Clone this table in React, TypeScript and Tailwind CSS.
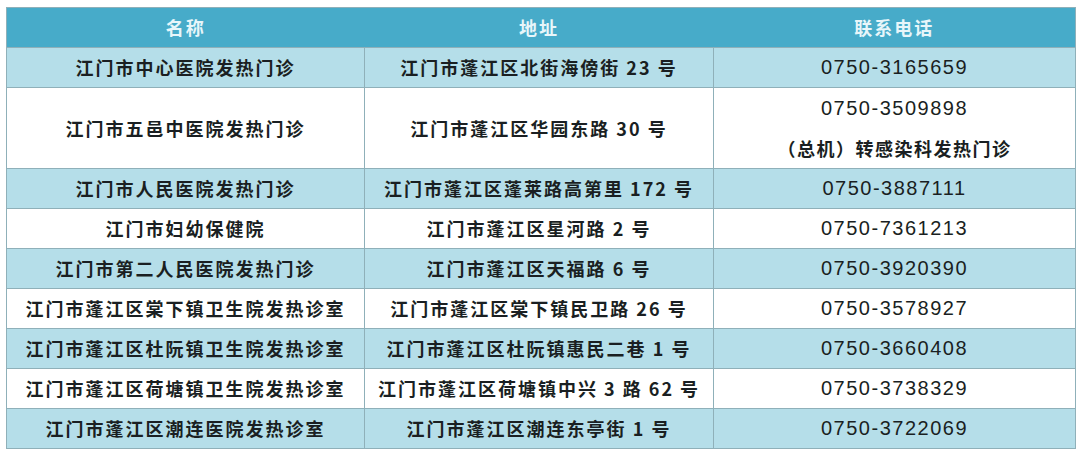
const rows: { name: string; addr: string; phone: string[]; tall?: boolean }[] = [
  { name: "江门市中心医院发热门诊", addr: "江门市蓬江区北街海傍街 23 号", phone: ["0750-3165659"] },
  { name: "江门市五邑中医院发热门诊", addr: "江门市蓬江区华园东路 30 号", phone: ["0750-3509898", "（总机）转感染科发热门诊"], tall: true },
  { name: "江门市人民医院发热门诊", addr: "江门市蓬江区蓬莱路高第里 172 号", phone: ["0750-3887111"] },
  { name: "江门市妇幼保健院", addr: "江门市蓬江区星河路 2 号", phone: ["0750-7361213"] },
  { name: "江门市第二人民医院发热门诊", addr: "江门市蓬江区天福路 6 号", phone: ["0750-3920390"] },
  { name: "江门市蓬江区棠下镇卫生院发热诊室", addr: "江门市蓬江区棠下镇民卫路 26 号", phone: ["0750-3578927"] },
  { name: "江门市蓬江区杜阮镇卫生院发热诊室", addr: "江门市蓬江区杜阮镇惠民二巷 1 号", phone: ["0750-3660408"] },
  { name: "江门市蓬江区荷塘镇卫生院发热诊室", addr: "江门市蓬江区荷塘镇中兴 3 路 62 号", phone: ["0750-3738329"] },
  { name: "江门市蓬江区潮连医院发热诊室", addr: "江门市蓬江区潮连东亭街 1 号", phone: ["0750-3722069"] },
];

const App = () => {
  return (
    <div
      className="h-[456px] w-[1080px] bg-white pl-[6px] pt-[7px]"
      style={{ fontFamily: '"Noto Sans CJK SC", "Noto Sans", sans-serif' }}
    >
      <table className="w-[1069px] table-fixed border-collapse border border-[#8fb0b9] text-center">
        <colgroup>
          <col className="w-[358px]" />
          <col className="w-[349px]" />
          <col className="w-[362px]" />
        </colgroup>
        <thead>
          <tr className="bg-[#47abc9] text-[18px] font-bold leading-[39px] tracking-[2px] text-[#e8f6fa]">
            <th className="p-0 font-bold">名称</th>
            <th className="p-0 font-bold">地址</th>
            <th className="p-0 font-bold">联系电话</th>
          </tr>
        </thead>
        <tbody>
          {rows.map((row, i) => (
            <tr key={row.name} className={i % 2 === 0 ? "bg-[#b5dee9]" : "bg-white"}>
              <td className="border border-[#8fb0b9] p-0 text-[18px] font-bold leading-[39px] tracking-[2px] text-[#1a1f22]">
                {row.name}
              </td>
              <td className="border border-[#8fb0b9] p-0 text-[18px] font-bold leading-[39px] tracking-[2px] text-[#1a1f22]">
                {row.addr}
              </td>
              <td className="border border-[#8fb0b9] p-0 text-[#1a1f22]">
                {row.phone.map((p) =>
                  p.startsWith("（") ? (
                    <div key={p} className="text-[18px] font-bold leading-[40px] tracking-[1.5px]">
                      {p}
                    </div>
                  ) : (
                    <div
                      key={p}
                      className={
                        (row.tall ? "leading-[40px] " : "leading-[39px] ") +
                        "font-['Liberation_Sans',Arial,sans-serif] text-[20px] tracking-[1.5px]"
                      }
                    >
                      {p}
                    </div>
                  ),
                )}
              </td>
            </tr>
          ))}
        </tbody>
      </table>
    </div>
  );
};

export default App;
